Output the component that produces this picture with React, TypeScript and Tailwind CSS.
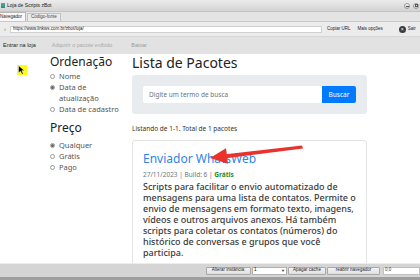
import React from 'react';

const chrome = "font-['Liberation_Sans',Arial,sans-serif]";
const web = "font-['Noto_Sans','Open_Sans',sans-serif]";

function Radio({ checked, children }: { checked?: boolean; children: React.ReactNode }) {
  return (
    <div className="flex items-start text-[7.5px] leading-[11px] text-[#555]">
      <span className="mt-[3px] mr-[4px] w-[5px] h-[5px] shrink-0 rounded-full border border-[#9a9a9a] bg-white flex items-center justify-center">
        {checked && <span className="w-[3px] h-[3px] rounded-full bg-[#666]" />}
      </span>
      <span>{children}</span>
    </div>
  );
}

function ChromeButton({ children, className = '' }: { children: React.ReactNode; className?: string }) {
  return (
    <div
      className={`h-[8px] flex items-center justify-center border border-[#a8a8a8] rounded-[1px] bg-linear-to-b from-[#f4f4f4] to-[#dedede] text-[4.5px] text-[#222] whitespace-nowrap ${className}`}
    >
      {children}
    </div>
  );
}

export default function App() {
  const lines = [
    'Scripts para facilitar o envio automatizado de',
    'mensagens para uma lista de contatos. Permite o',
    'envio de mensagens em formato texto, imagens,',
    'vídeos e outros arquivos anexos. Há também',
    'scripts para coletar os contatos (números) do',
    'histórico de conversas e grupos que você',
    'participa.',
  ];

  return (
    <div className="relative w-[420px] h-[280px] overflow-hidden flex flex-col bg-white">
      {/* title bar */}
      <div className={`${chrome} h-[12px] shrink-0 flex items-center bg-linear-to-b from-[#ececec] to-[#d3d3d3] border-b border-[#c4c4c4]`}>
        <span className="ml-[1px] w-[4px] h-[5px] bg-linear-to-b from-[#4aa3df] to-[#3a8f4a]" />
        <span className="ml-[2px] text-[5px] text-[#222]">Loja de Scripts zBot</span>
        <div className="ml-auto mr-[1px] flex gap-[3px]">
          <span className="w-[6px] h-[6px] rounded-full border border-[#999] bg-linear-to-b from-[#fafafa] to-[#cfcfcf] flex items-end justify-center">
            <span className="mb-[1px] w-[3px] h-px bg-[#555]" />
          </span>
          <span className="w-[6px] h-[6px] rounded-full border border-[#999] bg-linear-to-b from-[#fafafa] to-[#cfcfcf] flex items-center justify-center">
            <span className="w-[3px] h-[3px] border border-[#555]" />
          </span>
        </div>
      </div>

      {/* tabs */}
      <div className={`${chrome} h-[10px] shrink-0 flex items-end bg-[#e4e4e4] border-b border-[#c8c8c8]`}>
        <div className="ml-[-4px] h-[9px] px-[3px] flex items-center bg-[#f8f8f8] border border-b-0 border-[#b8b8b8] text-[4.5px] text-[#222]">
          Navegador
        </div>
        <div className="ml-px h-[8px] px-[3px] flex items-center bg-[#ececec] border border-b-0 border-[#c2c2c2] text-[4.5px] text-[#444]">
          Código-fonte
        </div>
      </div>

      {/* address */}
      <div className={`${chrome} h-[14px] shrink-0 flex items-center bg-[#ececec] text-[4.5px] text-[#222] whitespace-nowrap`}>
        <span className="w-[10px] text-center text-[#777] text-[6px]">‹</span>
        <div className="w-[312px] h-[7px] flex items-center bg-white border border-[#d0d0d0] pl-[2px] text-[4.5px]">
          https://www.linkws.com.br/zbot/loja/
        </div>
        <span className="ml-[5px]">Copiar URL</span>
        <span className="ml-[7px]">Mais opções</span>
        <span className="ml-[16px] w-[7px] h-[7px] shrink-0 rounded-full bg-[#3b3b3b] text-white text-[5px] leading-[7px] text-center">×</span>
        <span className="ml-[2px]">Sair</span>
      </div>

      {/* toolbar */}
      <div className={`${chrome} h-[18px] shrink-0 flex items-center bg-[#e2e2e2] border-t border-[#d6d6d6] text-[5.5px]`}>
        <span className="ml-[3px] text-[#222]">Entrar na loja</span>
        <span className="ml-[16px] text-[#a9a9a9]">Adquirir o pacote exibido</span>
        <span className="ml-[19px] text-[#9a9a9a]">Baixar</span>
      </div>

      {/* page */}
      <div className={`${web} relative flex-1 flex pl-[50px] bg-white overflow-hidden`}>
        <aside className="w-[82px] shrink-0 pt-px">
          <h3 className="text-[12px] leading-[14px] text-[#222]">Ordenação</h3>
          <div className="mt-[2px]">
            <Radio>Nome</Radio>
            <Radio checked>
              Data de
              <br />
              atualização
            </Radio>
            <Radio>Data de cadastro</Radio>
          </div>
          <h3 className="mt-[6px] text-[12px] leading-[14px] text-[#222]">Preço</h3>
          <div className="mt-[5px]">
            <Radio checked>Qualquer</Radio>
            <Radio>Grátis</Radio>
            <Radio>Pago</Radio>
          </div>
        </aside>

        <main className="w-[235px] shrink-0">
          <h1 className="text-[14px] leading-[17px] text-[#222]">Lista de Pacotes</h1>
          <div className="mt-[4px] h-[39px] rounded-[3px] bg-[#e9ecef] px-[11px] flex items-center">
            <div className="flex-1 h-[17px] bg-white rounded-l-[2px] flex items-center pl-[6px] text-[6.5px] text-[#6c757d]">
              Digite um termo de busca
            </div>
            <button className="w-[34px] h-[17px] bg-[#007bff] rounded-r-[2px] text-white text-[6.5px]">Buscar</button>
          </div>
          <p className="mt-[10px] text-[6.5px] leading-[9px] text-[#333]">Listando de 1-1. Total de 1 pacotes</p>
          <div className="mt-[7px] border border-[#e3e3e3] rounded-[3px] px-[10px] pt-[10px] pb-[10px]">
            <h2 className="text-[12px] leading-[15px] text-[#2f84e8]">Enviador WhatsWeb</h2>
            <div className="mt-[5px] text-[6.5px] leading-[8px] text-[#6c757d]">
              27/11/2023 | Build: 6 | <span className="font-bold text-[#1f8a2e]">Grátis</span>
            </div>
            <div className="mt-[2px] text-[9px] leading-[11px] font-medium text-[#3a3a3a]">
              {lines.map((l) => (
                <span key={l} className="block whitespace-nowrap">
                  {l}
                </span>
              ))}
            </div>
          </div>
        </main>

        {/* cursor highlight */}
        <div className="absolute left-[17px] top-[11px] w-[10px] h-[10px] bg-[#ffff00]">
          <svg width="8" height="10" viewBox="0 0 8 10" className="absolute left-[1px] top-0">
            <path d="M0.5 0.5 L0.5 8 L2.5 6.2 L4 9.3 L5.3 8.7 L3.8 5.7 L6.5 5.7 Z" fill="#000" stroke="#fff" strokeWidth="0.5" />
          </svg>
        </div>
      </div>

      {/* status bar */}
      <div className={`${chrome} h-[17px] shrink-0 flex flex-col`}>
        <div className="h-[14px] bg-[#d5d5d5] border-t border-[#ededed] flex items-center justify-end">
          <ChromeButton className="w-[45px]">Alterar instância:</ChromeButton>
          <div className="ml-px w-[35px] h-[8px] bg-white border border-[#b0b0b0] flex items-center text-[4.5px] pl-[1px]">
            1<span className="ml-auto mr-[1px] text-[4px] text-[#333]">▼</span>
          </div>
          <ChromeButton className="ml-px w-[38px]">Apagar cache</ChromeButton>
          <ChromeButton className="ml-px w-[53px]">reabrir navegador</ChromeButton>
          <div className="ml-[3px] w-[37px] h-[8px] bg-white border border-[#c0c0c0] text-[4.5px] pl-[1px] flex items-center text-[#444]">0;0</div>
        </div>
        <div className="flex-1 bg-[#9f9f9f]" />
      </div>

      {/* red annotation arrow */}
      <svg className="absolute left-0 top-0 pointer-events-none" width="420" height="280" viewBox="0 0 420 280">
        <path d="M302 145.5 L303 148.5 L226 158.2 L225.5 154.2 Z" fill="#e8322b" />
        <path d="M210 158 L228 163.8 L226 148.3 Z" fill="#e8322b" />
      </svg>
    </div>
  );
}
